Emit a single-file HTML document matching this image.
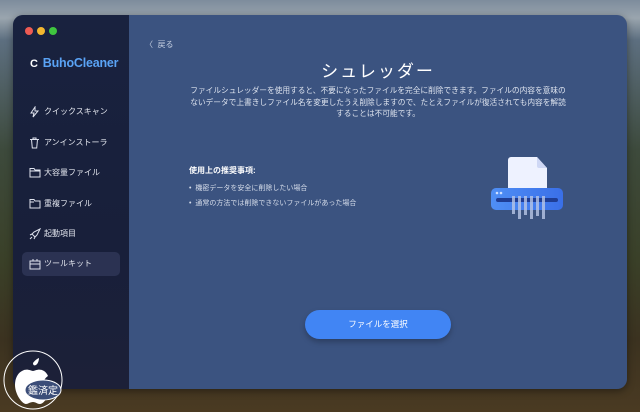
<!DOCTYPE html>
<html><head><meta charset="utf-8"><style>
*{margin:0;padding:0;box-sizing:border-box}
body{width:640px;height:412px;overflow:hidden;position:relative;font-family:"Liberation Sans","Noto Sans CJK JP",sans-serif;
background:linear-gradient(180deg,#7d8c9c 0px,#9aa5ae 18px,#5d6f80 40px,#3d4a3c 150px,#3a4028 260px,#3b3220 340px,#4a3a22 412px);}
.win{position:absolute;left:13px;top:15px;width:614px;height:374px;border-radius:10px;overflow:hidden;background:#3b5380;box-shadow:0 2px 8px rgba(0,0,0,.4)}
.side{position:absolute;left:0;top:0;width:116px;height:100%;background:linear-gradient(180deg,#19223f,#181f3a 60%,#1c2038);}
.dot{position:absolute;top:12px;width:8px;height:8px;border-radius:50%}
.logo{position:absolute;left:17px;top:41px;color:#5aa3f5;font-size:12.5px;font-weight:bold;letter-spacing:-0.2px;white-space:nowrap}
.logo span{color:#fff;font-size:11px;margin-right:5px}
.item{position:absolute;left:9px;width:98px;height:24px;color:#e4e7ef;font-size:8px;line-height:24px;padding-left:22px;white-space:nowrap}
.item svg{position:absolute;left:7px;top:6px}
.item.sel{background:#2b3252;border-radius:5px}
.back{position:absolute;left:132px;top:24px;color:#c4cee0;font-size:8px}
h1{position:absolute;left:116px;width:498px;top:42px;text-align:center;color:#fff;font-weight:normal;font-size:17px;letter-spacing:2px}
.desc{position:absolute;left:156px;width:418px;top:70px;text-align:center;color:#dde3ee;font-size:7.7px;line-height:11.5px;white-space:nowrap}
.rec{position:absolute;left:176px;top:150px;color:#fff;font-size:8px;font-weight:bold}
.li{position:absolute;left:176px;color:#d6ddea;font-size:7px}
.btn{position:absolute;left:292px;top:295px;width:146px;height:29px;border-radius:15px;background:#4185f4;color:#fff;font-size:8.5px;text-align:center;line-height:29px;box-shadow:0 3px 6px rgba(0,0,0,.25)}
</style></head><body>
<div class="win">
<div class="side">
<div class="dot" style="left:12px;background:#ee5b53"></div>
<div class="dot" style="left:24px;background:#f3b72f"></div>
<div class="dot" style="left:36px;background:#3fc63f"></div>
<div class="logo"><span>C</span>BuhoCleaner</div>
<div class="item" style="top:85px"><svg width="11" height="12" viewBox="0 0 11 12" fill="none" stroke="#dfe3ee" stroke-width="1"><path d="M6 1L2 7h3l-1 4 5-6H6z"/></svg>クイックスキャン</div>
<div class="item" style="top:116px"><svg width="11" height="12" viewBox="0 0 11 12" fill="none" stroke="#dfe3ee" stroke-width="1"><path d="M1 2.5h9M4 2.5V1h3v1.5M2.5 2.5l.8 8.5h4.4l.8-8.5"/></svg>アンインストーラ</div>
<div class="item" style="top:146px"><svg width="12" height="11" viewBox="0 0 12 11" fill="none" stroke="#dfe3ee" stroke-width="1"><path d="M1 1.5h4l1 1.5h5v7H1zM1 4h10"/></svg>大容量ファイル</div>
<div class="item" style="top:177px"><svg width="12" height="11" viewBox="0 0 12 11" fill="none" stroke="#dfe3ee" stroke-width="1"><path d="M1 1.5h4l1 1.5h5v7H1zM1 4h4"/></svg>重複ファイル</div>
<div class="item" style="top:207px"><svg width="12" height="12" viewBox="0 0 12 12" fill="none" stroke="#dfe3ee" stroke-width="1"><path d="M11 1L5 4 3 6l3 3 2-2 3-6zM3 6L1 7M6 9L5 11M3 9l-2 2"/></svg>起動項目</div>
<div class="item sel" style="top:237px"><svg width="12" height="12" viewBox="0 0 12 12" fill="none" stroke="#dfe3ee" stroke-width="1"><path d="M1 3h10v8H1zM1 6h10M4 3V1M8 3V1"/></svg>ツールキット</div>
</div>
<div class="back">〈&nbsp; 戻る</div>
<h1>シュレッダー</h1>
<div class="desc">ファイルシュレッダーを使用すると、不要になったファイルを完全に削除できます。ファイルの内容を意味の<br>ないデータで上書きしファイル名を変更したうえ削除しますので、たとえファイルが復活されても内容を解読<br>することは不可能です。</div>
<div class="rec">使用上の推奨事項:</div>
<div class="li" style="top:168px">•&nbsp; 機密データを安全に削除したい場合</div>
<div class="li" style="top:183px">•&nbsp; 通常の方法では削除できないファイルがあった場合</div>
<svg style="position:absolute;left:477px;top:140px" width="76" height="64" viewBox="0 0 76 64">
<defs><linearGradient id="g" x1="0" x2="1"><stop offset="0" stop-color="#4f8ff5"/><stop offset="1" stop-color="#3a6fe8"/></linearGradient></defs>
<path d="M18 5a3 3 0 0 1 3-3h26l10 11v24H18z" fill="#eef2ff"/>
<path d="M47 2v9a2 2 0 0 0 2 2h8z" fill="#cfd8f5"/>
<rect x="1" y="33" width="72" height="22" rx="5" fill="url(#g)"/>
<circle cx="7" cy="38" r="1.3" fill="#cfe0ff"/><circle cx="11" cy="38" r="1.3" fill="#cfe0ff"/>
<rect x="6" y="43" width="62" height="4" rx="2" fill="#1f3d94"/>
<g fill="#b8c6e6" opacity=".8"><rect x="22" y="41" width="3" height="18"/><rect x="28" y="41" width="3" height="23"/><rect x="34" y="41" width="3" height="19"/><rect x="40" y="41" width="3" height="23"/><rect x="46" y="41" width="3" height="20"/><rect x="52" y="41" width="3" height="23"/></g>
</svg>
<div class="btn">ファイルを選択</div>
</div>
<svg style="position:absolute;left:2px;top:347px" width="64" height="64" viewBox="0 0 64 64">
<circle cx="31" cy="33" r="29" fill="none" stroke="#fff" stroke-width="1"/>
<path d="M31 16c3-4 6-5 6-5s0 5-3 7c-2 1-3 0-3-2zM20 24c5-3 9 0 11 0s6-3 11 0c3 2 4 5 4 5s-5 3-5 9 6 8 6 8c-2 6-6 11-9 11s-4-2-7-2-5 2-7 2c-4 0-11-10-11-19 0-7 3-12 7-14z" fill="#fff"/>
<ellipse cx="41" cy="43" rx="18" ry="10" fill="#3b4d78" stroke="#fff" stroke-width="1"/>
<text x="41" y="47" font-size="10" fill="#fff" text-anchor="middle" font-family="Noto Sans CJK JP,sans-serif">鑑済定</text>
</svg>
</body></html>
